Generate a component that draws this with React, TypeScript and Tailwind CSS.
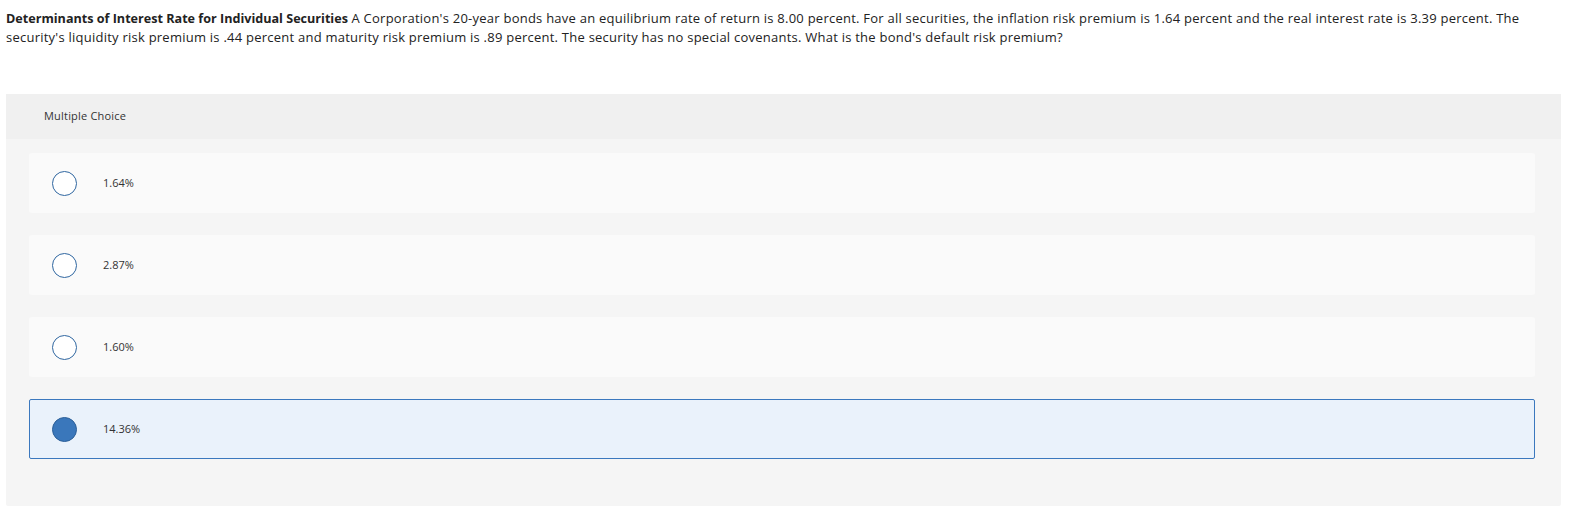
import React from "react";

const options = [
  { label: "1.64%", selected: false },
  { label: "2.87%", selected: false },
  { label: "1.60%", selected: false },
  { label: "14.36%", selected: true },
];

export default function App() {
  return (
    <div className="w-[1578px] h-[521px] bg-white text-[#333] font-['Open_Sans',sans-serif]">
      <div className="pl-[6px] w-[1545px] pt-[9px] text-[13px] tracking-[0.24px] leading-[19px] text-[#222]">
        <span className="font-bold text-[12.6px] tracking-normal">Determinants of Interest Rate for Individual Securities</span>{" "}
        A Corporation's 20-year bonds have an equilibrium rate of return is 8.00 percent. For all securities, the inflation risk premium is 1.64 percent and the real interest rate is 3.39 percent. The security's liquidity risk premium is .44 percent and maturity risk premium is .89 percent. The security has no special covenants. What is the bond's default risk premium?
      </div>
      <div className="ml-[6px] mt-[47px] w-[1555px] h-[412px] bg-[#f5f5f5] rounded-[2px] flex flex-col">
        <div className="h-[45px] bg-[#f0f0f0] flex items-center pl-[38px] text-[11px] tracking-[0.2px] text-[#333]">
          Multiple Choice
        </div>
        <div className="flex flex-col gap-[22px] pt-[14px] pl-[23px] pr-[26px]">
          {options.map((o) => (
            <div
              key={o.label}
              className={
                o.selected
                  ? "h-[60px] flex items-center bg-[#eaf2fb] border border-[#3b78be] rounded-[2px]"
                  : "h-[60px] flex items-center bg-[#fafafa] border border-transparent rounded-[3px]"
              }
            >
              <div
                className={
                  o.selected
                    ? "ml-[22px] w-[25px] h-[25px] rounded-full bg-[#3a77bb] border border-[#2c5f98]"
                    : "ml-[22px] w-[25px] h-[25px] rounded-full bg-white border-[1.5px] border-[#2f66a0]"
                }
              />
              <span className="ml-[26px] text-[11px] text-[#333]">{o.label}</span>
            </div>
          ))}
        </div>
      </div>
    </div>
  );
}
